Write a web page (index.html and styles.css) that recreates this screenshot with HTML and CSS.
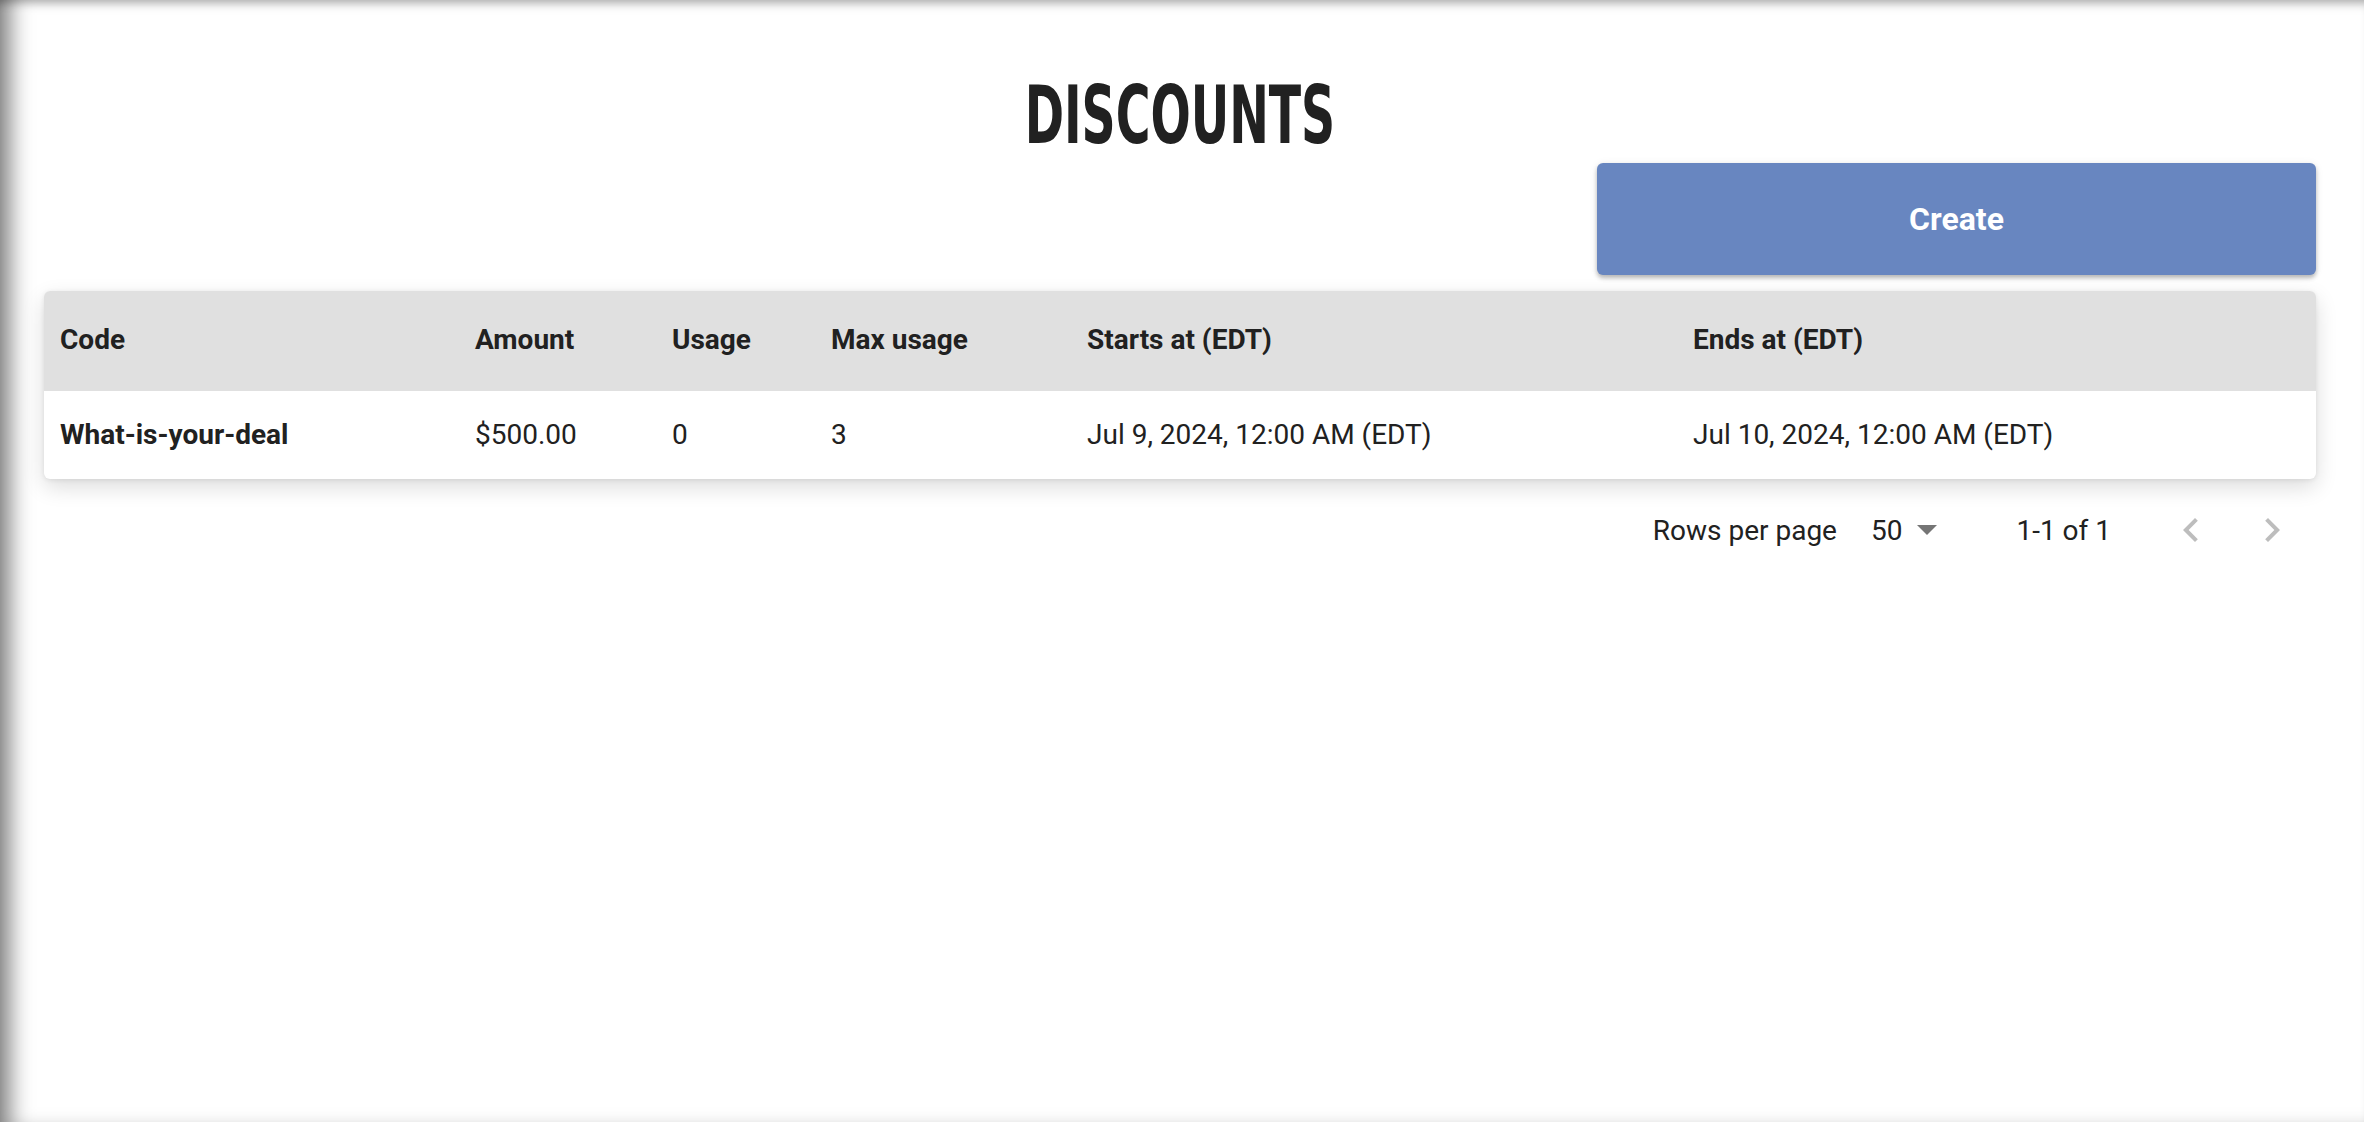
FILE: index.html
```html
<!DOCTYPE html>
<html lang="en">
<head>
    <meta charset="UTF-8">
    <meta name="viewport" content="width=device-width, initial-scale=1.0">
    <title>Discounts</title>
    <link rel="stylesheet" href="styles.css">
</head>
<body>
    <main class="page">
        <h1 class="title"><span>DISCOUNTS</span></h1>

        <div class="toolbar">
            <button class="create-button">Create</button>
        </div>

        <div class="table-card">
            <table class="discount-table">
                <colgroup>
                    <col class="col-code">
                    <col class="col-amount">
                    <col class="col-usage">
                    <col class="col-max">
                    <col class="col-starts">
                    <col class="col-ends">
                </colgroup>
                <thead>
                    <tr>
                        <th>Code</th>
                        <th>Amount</th>
                        <th>Usage</th>
                        <th>Max usage</th>
                        <th>Starts at (EDT)</th>
                        <th>Ends at (EDT)</th>
                    </tr>
                </thead>
                <tbody>
                    <tr>
                        <td class="code-cell">What-is-your-deal</td>
                        <td>$500.00</td>
                        <td>0</td>
                        <td>3</td>
                        <td>Jul 9, 2024, 12:00 AM (EDT)</td>
                        <td>Jul 10, 2024, 12:00 AM (EDT)</td>
                    </tr>
                </tbody>
            </table>
        </div>

        <div class="pagination">
            <span class="rows-label">Rows per page</span>
            <div class="rows-select">
                <span>50</span>
                <svg class="select-arrow" viewBox="0 0 20 10" width="20" height="10">
                    <path d="M0 0h20L10 10z" fill="#757575"/>
                </svg>
            </div>
            <span class="range">1-1 of 1</span>
            <svg class="page-arrow prev" viewBox="0 0 24 24" width="48" height="48">
                <path d="M15.41 7.41 14 6l-6 6 6 6 1.41-1.41L10.83 12z" fill="#bdbdbd"/>
            </svg>
            <svg class="page-arrow next" viewBox="0 0 24 24" width="48" height="48">
                <path d="M10 6 8.59 7.41 13.17 12l-4.58 4.59L10 18l6-6z" fill="#bdbdbd"/>
            </svg>
        </div>
    </main>
</body>
</html>
```

FILE: styles.css
```css
* {
    margin: 0;
    padding: 0;
    box-sizing: border-box;
}

body {
    font-family: Roboto, 'Liberation Sans', sans-serif;
    color: #212121;
    background: #ffffff;
}

.page {
    min-height: 100vh;
    padding: 75px 48px 0 44px;
    box-shadow: inset 22px 0 22px -12px rgba(0, 0, 0, 0.5),
                inset 0 9px 10px -6px rgba(0, 0, 0, 0.28);
}

.title {
    text-align: center;
    font-family: 'DejaVu Sans Condensed', 'Liberation Sans', sans-serif;
    font-weight: 700;
    font-size: 81px;
    line-height: 81px;
    color: #212121;
}

.title span {
    display: inline-block;
    transform: scaleX(0.65);
}

.toolbar {
    display: flex;
    justify-content: flex-end;
    margin-top: 7px;
}

.create-button {
    width: 719px;
    height: 112px;
    background: #6886c0;
    color: #ffffff;
    border: none;
    border-radius: 6px;
    font-family: Roboto, sans-serif;
    font-size: 32px;
    font-weight: 700;
    cursor: pointer;
    box-shadow: 0 3px 4px rgba(0, 0, 0, 0.25), 0 1px 8px rgba(0, 0, 0, 0.08);
}

.table-card {
    margin-top: 16px;
    border-radius: 6px;
    overflow: hidden;
    background: #ffffff;
    box-shadow: 0 8px 22px rgba(0, 0, 0, 0.14), 0 1px 5px rgba(0, 0, 0, 0.08);
}

.discount-table {
    width: 100%;
    border-collapse: collapse;
    table-layout: fixed;
    font-size: 28px;
}

.col-code { width: 415px; }
.col-amount { width: 197px; }
.col-usage { width: 159px; }
.col-max { width: 256px; }
.col-starts { width: 606px; }
.col-ends { width: 639px; }

.discount-table th {
    height: 100px;
    padding: 0 16px 4px;
    background: #e0e0e0;
    text-align: left;
    font-weight: 700;
}

.discount-table td {
    height: 88px;
    padding: 0 16px 2px;
    font-weight: 400;
}

.discount-table td.code-cell {
    font-weight: 700;
}

.pagination {
    display: flex;
    justify-content: flex-end;
    align-items: center;
    height: 64px;
    margin-top: 19px;
    padding-right: 20px;
    font-size: 28px;
}

.rows-select {
    display: flex;
    align-items: center;
    gap: 15px;
    margin-left: 34px;
}

.range {
    margin-left: 79px;
}

.page-arrow.prev {
    margin-left: 56px;
}

.page-arrow.next {
    margin-left: 33px;
}
```
